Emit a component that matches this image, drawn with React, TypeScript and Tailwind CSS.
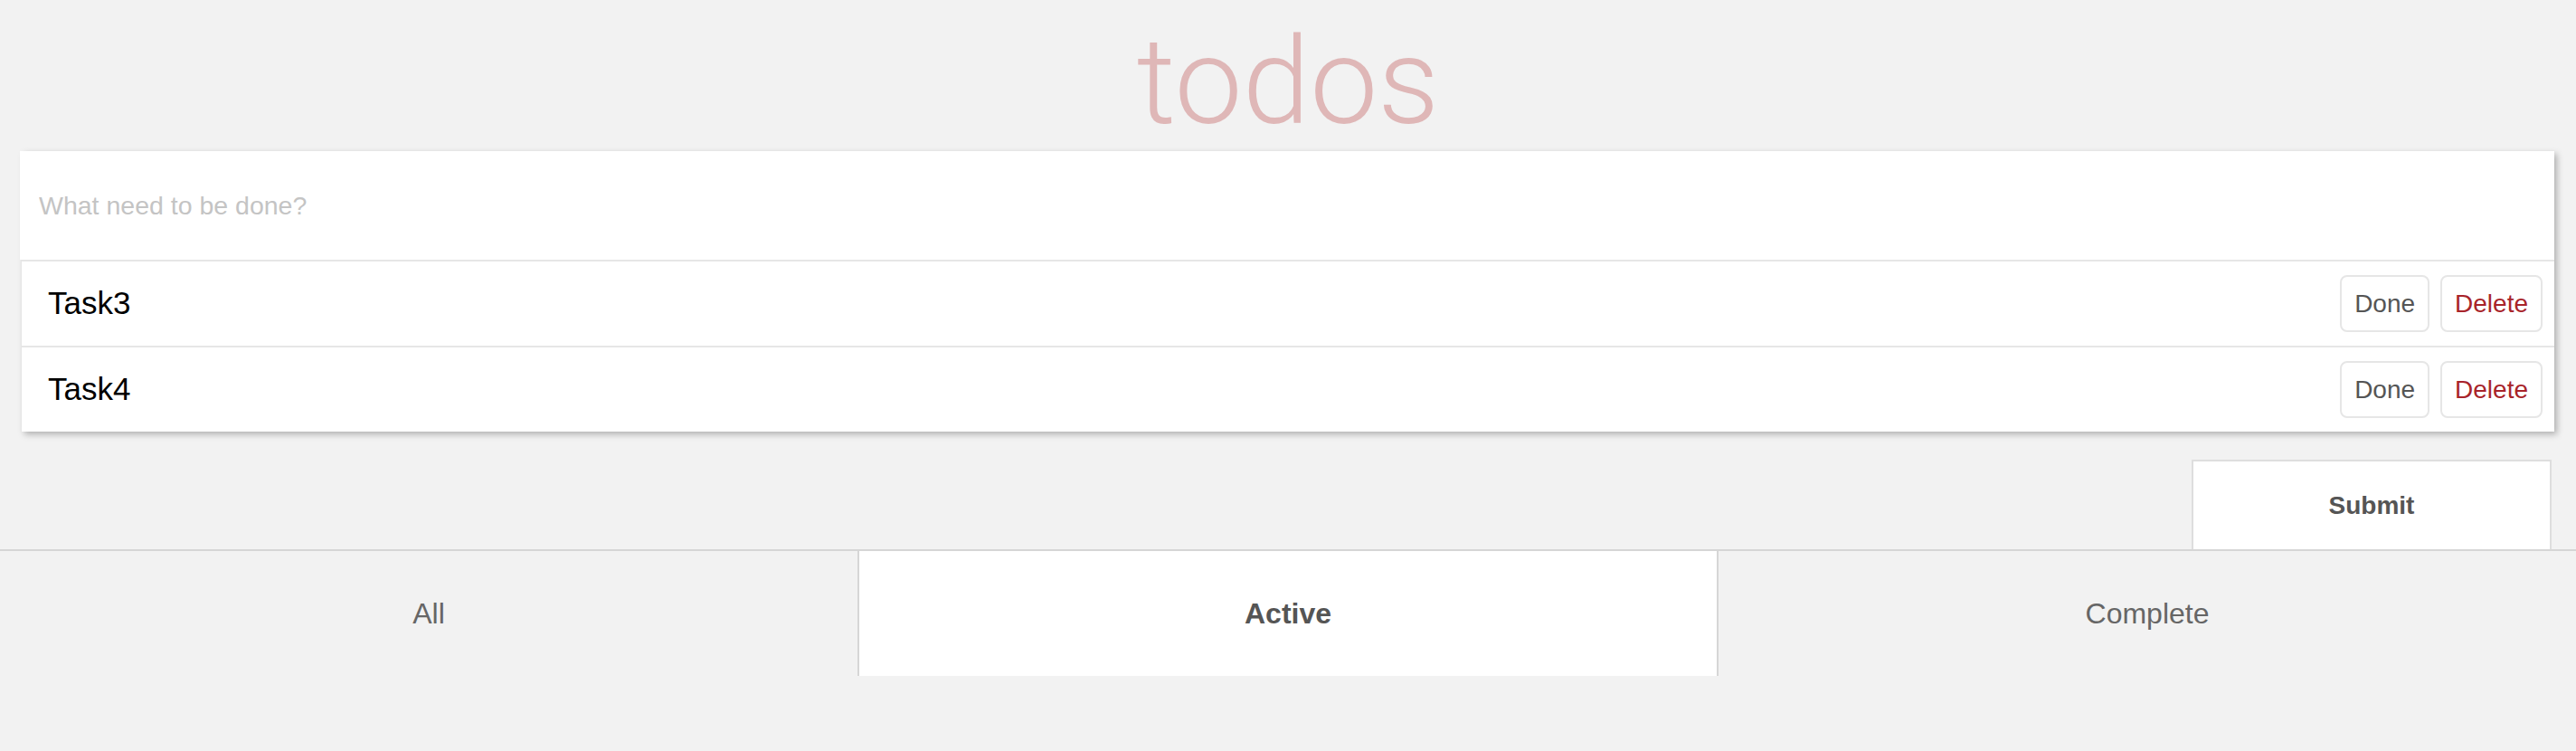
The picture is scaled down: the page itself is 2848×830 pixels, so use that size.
import { useState } from "react";

type Filter = "all" | "active" | "complete";

interface Todo {
  id: number;
  title: string;
  done: boolean;
}

const initialTodos: Todo[] = [
  { id: 1, title: "Task1", done: true },
  { id: 2, title: "Task2", done: true },
  { id: 3, title: "Task3", done: false },
  { id: 4, title: "Task4", done: false },
];

function TodoRow({ todo, onToggle, onDelete }: { todo: Todo; onToggle: () => void; onDelete: () => void }) {
  return (
    <li className="flex h-[95px] items-center justify-between border-t-2 border-[#e6e6e6] pl-[29px] pr-[13px]">
      <span className="text-[35px] text-black">{todo.title}</span>
      <div className="flex gap-[12px]">
        <button
          onClick={onToggle}
          className="h-[63px] rounded-lg border-2 border-[#e6e6e6] bg-white px-[14px] text-[28px] text-[#555]"
        >
          Done
        </button>
        <button
          onClick={onDelete}
          className="h-[63px] rounded-lg border-2 border-[#e6e6e6] bg-white px-[14px] text-[28px] text-[#a8242a]"
        >
          Delete
        </button>
      </div>
    </li>
  );
}

export default function App() {
  const [todos, setTodos] = useState<Todo[]>(initialTodos);
  const [filter, setFilter] = useState<Filter>("active");
  const [text, setText] = useState("");

  const visible = todos.filter((t) => (filter === "all" ? true : filter === "active" ? !t.done : t.done));

  function submit() {
    if (!text.trim()) return;
    setTodos((prev) => [...prev, { id: Date.now(), title: text.trim(), done: false }]);
    setText("");
  }

  const tabs: { key: Filter; label: string }[] = [
    { key: "all", label: "All" },
    { key: "active", label: "Active" },
    { key: "complete", label: "Complete" },
  ];

  return (
    <div className="min-h-[830px] bg-[#f2f2f2] font-['Helvetica_Neue','Liberation_Sans',Arial,sans-serif]">
      <h1 className="flex h-[167px] items-start justify-center pt-[24px] font-['Roboto',sans-serif] text-[134px] font-light leading-none text-[#dfb7b7]">
        todos
      </h1>

      <div className="mx-[24px] bg-white shadow-[3px_3px_7px_rgba(0,0,0,0.28)]">
        <input
          value={text}
          onChange={(e) => setText(e.target.value)}
          onKeyDown={(e) => e.key === "Enter" && submit()}
          placeholder="What need to be done?"
          className="-ml-[2px] block h-[120px] w-[calc(100%+2px)] bg-white pl-[21px] text-[28.5px] text-black outline-none placeholder:text-[#c4c4c4]"
        />
        <ul>
          {visible.map((todo) => (
            <TodoRow
              key={todo.id}
              todo={todo}
              onToggle={() => setTodos((prev) => prev.map((t) => (t.id === todo.id ? { ...t, done: !t.done } : t)))}
              onDelete={() => setTodos((prev) => prev.filter((t) => t.id !== todo.id))}
            />
          ))}
        </ul>
      </div>

      <div className="mt-[31px] flex justify-end pr-[27px]">
        <button
          onClick={submit}
          className="h-[99px] w-[398px] border-2 border-b-0 border-[#dedede] bg-white text-[28px] font-bold text-[#555]"
        >
          Submit
        </button>
      </div>

      <div className="flex h-[140px] border-t-2 border-[#d6d6d6]">
        {tabs.map((tab) => (
          <button
            key={tab.key}
            onClick={() => setFilter(tab.key)}
            className={
              tab.key === filter
                ? "flex-1 border-x-2 border-[#d6d6d6] bg-white text-[32px] font-bold text-[#555]"
                : "flex-1 bg-[#f2f2f2] text-[32px] text-[#666]"
            }
          >
            {tab.label}
          </button>
        ))}
      </div>
    </div>
  );
}
